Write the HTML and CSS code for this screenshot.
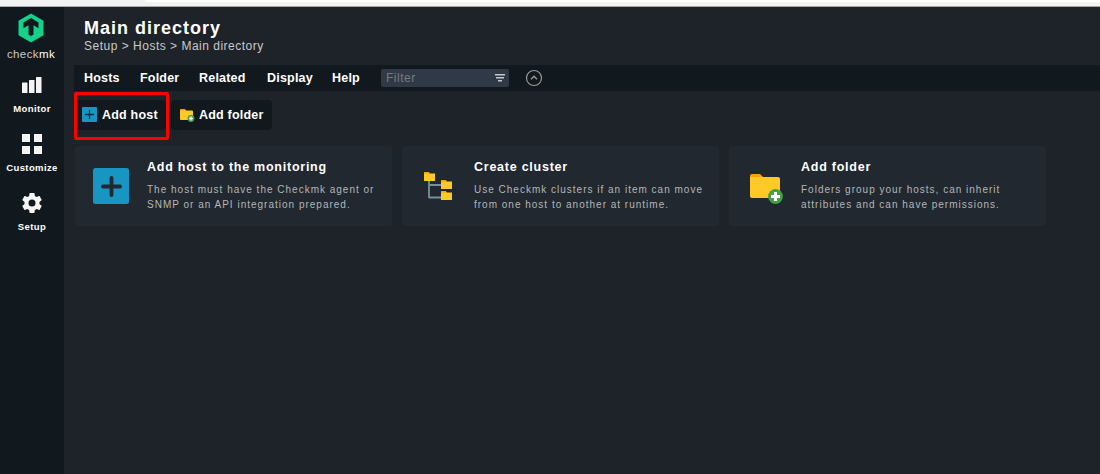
FILE: index.html
```html
<!DOCTYPE html>
<html lang="en">
<head>
<meta charset="utf-8">
<title>Main directory</title>
<link rel="stylesheet" href="styles.css">
</head>
<body>
<div class="browser-edge"><div class="address-bar"></div></div>
<div class="app">
  <nav class="sidebar">
    <a class="brand">
      <svg width="26" height="30" viewBox="0 0 26 30"><path fill="#15d189" d="M13 .5 25.500 7.700v14.600L13 29.500.5 22.300V7.700z"/><path fill="#11181e" d="M13 5 20.500 9.500v5.800L15.500 12.300V21.500L13 23 10.500 21.500V12.300L5.500 15.300V9.500z"/></svg>
      <span class="brand-name">check<b>mk</b></span>
    </a>
    <a class="side-item">
      <svg width="20" height="20" viewBox="0 0 20 20" fill="#f5f5f5"><rect x="0" y="7.500" width="5.500" height="10.500" rx=".6"/><rect x="7" y="5" width="5.500" height="13" rx=".6"/><rect x="14" y="2" width="5.500" height="16" rx=".6"/></svg>
      <span>Monitor</span>
    </a>
    <a class="side-item">
      <svg width="20" height="20" viewBox="0 0 20 20" fill="#f5f5f5"><path d="M0 0h8v8H0zM12 0h8v8h-8zM0 12h8v8H0zM12 12h8v8h-8z"/></svg>
      <span>Customize</span>
    </a>
    <a class="side-item">
      <svg width="20" height="20" viewBox="2 2 20 20" fill="#f5f5f5"><path d="M19.430 12.980c.04-.32.07-.64.07-.98s-.03-.66-.07-.98l2.110-1.650c.19-.15.24-.42.12-.64l-2-3.460c-.12-.22-.39-.3-.61-.22l-2.490 1c-.52-.4-1.080-.73-1.690-.98l-.38-2.650C14.460 2.180 14.250 2 14 2h-4c-.25 0-.46.18-.49.42l-.38 2.650c-.61.25-1.170.59-1.690.98l-2.490-1c-.23-.09-.49 0-.61.22l-2 3.460c-.13.22-.07.49.12.64l2.110 1.650c-.04.32-.07.65-.07.98s.03.66.07.98l-2.110 1.650c-.19.15-.24.42-.12.64l2 3.460c.12.22.39.3.61.22l2.490-1c.52.4 1.080.73 1.690.98l.38 2.650c.03.24.24.42.49.42h4c.25 0 .46-.18.49-.42l.38-2.650c.61-.25 1.170-.59 1.690-.98l2.490 1c.23.09.49 0 .61-.22l2-3.460c.12-.22.07-.49-.12-.64zM12 15.500a3.500 3.500 0 1 1 0-7 3.500 3.500 0 0 1 0 7z"/></svg>
      <span>Setup</span>
    </a>
  </nav>
  <main class="main">
    <header class="head">
      <h1>Main directory</h1>
      <div class="crumbs">Setup &gt; Hosts &gt; Main directory</div>
    </header>
    <div class="menubar">
      <a class="m-hosts">Hosts</a><a class="m-folder">Folder</a><a class="m-related">Related</a><a class="m-display">Display</a><a class="m-help">Help</a>
      <div class="filter"><span>Filter</span>
        <svg width="10" height="8" viewBox="0 0 10 8" fill="#c3c8cd"><path d="M0 0h10v1.600H0zM1 3h8v1.500H1zM3 6h4v1.600H3z"/></svg>
      </div>
      <svg class="toggle" width="18" height="18" viewBox="0 0 18 18" fill="none" stroke="#9a9a9a"><circle cx="9" cy="9" r="7.500" stroke-width="1.200"/><path stroke-width="1.400" d="m6 10.300 3-3 3 3"/></svg>
    </div>
    <div class="actions">
      <a class="action action-host">
        <svg width="15" height="15" viewBox="0 0 15 15"><rect width="15" height="15" rx="1" fill="#1796c4"/><path d="M7.500 3v9M3 7.500h9" stroke="#11283a" stroke-width="1.300"/></svg>
        <span>Add host</span>
      </a>
      <a class="action action-folder">
        <svg width="15" height="14" viewBox="0 0 15 14"><path fill="#ff9f0a" d="M0 1.500Q0 1 .7 1H5l1.500 2V5H0z"/><path fill="#ffca28" d="M0 2.500h12q1 0 1 1V11q0 1-1 1H1q-1 0-1-1z"/><circle cx="11" cy="10.500" r="3.400" fill="#43a047"/><path stroke="#fff" stroke-width="1.300" d="M11 8.500v4M9 10.500h4"/></svg>
        <span>Add folder</span>
      </a>
      <div class="highlight"></div>
    </div>
    <section class="cards">
      <a class="card">
        <svg class="card-icon" width="36" height="36" viewBox="0 0 36 36"><rect width="36" height="36" rx="2.500" fill="#1796c4"/><path d="M18.500 10v17M10 18.500h17" stroke="#21282f" stroke-width="3.800" stroke-linecap="round"/></svg>
        <div><h2>Add host to the monitoring</h2><p>The host must have the Checkmk agent or<br>SNMP or an API integration prepared.</p></div>
      </a>
      <a class="card">
        <svg class="card-icon" width="36" height="36" viewBox="0 0 36 36"><path d="M9 12v18M9 17h12M9 29.500h12" fill="none" stroke="#78909c" stroke-width="1.800"/><path fill="#ff9f0a" d="M4 4h5l1 2v3H4zM21 12h5l1 2v3h-6zM21 23h5l1 2v3h-6z"/><path fill="#ffca28" d="M4 5.500h11V13H4zM21 13.500h11V21H21zM21 24.500h11V32H21z"/></svg>
        <div><h2>Create cluster</h2><p>Use Checkmk clusters if an item can move<br>from one host to another at runtime.</p></div>
      </a>
      <a class="card">
        <svg class="card-icon" width="36" height="36" viewBox="0 0 36 36"><path fill="#ff9f0a" d="M3 8q0-2 2-2h8l3 3v5H3z"/><path fill="#ffca28" d="M3 9h28q2 0 2 2v17q0 2-2 2H5q-2 0-2-2z"/><circle cx="28.500" cy="28.500" r="7.400" fill="#43a047"/><path stroke="#fff" stroke-width="3" d="M28.500 24v9M24 28.500h9"/></svg>
        <div><h2>Add folder</h2><p>Folders group your hosts, can inherit<br>attributes and can have permissions.</p></div>
      </a>
    </section>
  </main>
</div>
</body>
</html>
```
FILE: styles.css
```css
* { box-sizing: border-box; }
body {
  margin: 0;
  height: 474px;
  overflow: hidden;
  background: #1e2229;
  color: #fff;
  font-family: "Liberation Sans", Arial, sans-serif;
}
svg { display: block; flex: none; }
h1, h2, p { margin: 0; }
.browser-edge { height: 7px; background: #f2f2f2; border-bottom: 1px solid #a8acaf; }
.address-bar { margin-left: 145px; height: 2px; background: #fff; border-radius: 0 0 0 3px; }
.app { display: flex; height: 467px; }
.sidebar {
  width: 64px;
  flex: none;
  background: #11181e;
  display: flex;
  flex-direction: column;
  align-items: center;
}
.brand { height: 69px; padding: 6px 2px 0 0; display: flex; flex-direction: column; align-items: center; }
.brand-name { margin-top: 5px; font-size: 11.500px; line-height: 13px; color: #c6c8ca; letter-spacing: 0.4px; }
.brand-name b { font-weight: normal; color: #fff; }
.side-item {
  height: 59px;
  display: flex;
  flex-direction: column;
  align-items: center;
  font-size: 9.500px;
  font-weight: bold;
  letter-spacing: 0.4px;
}
.side-item svg { margin-top: -1px; }
.side-item span { line-height: 12px; margin-top: 8px; }
.main { flex: 1; min-width: 0; }
.head { height: 58px; padding: 10px 0 0 20px; }
h1 { font-size: 18px; line-height: 22px; letter-spacing: 1px; }
.crumbs { font-size: 12px; line-height: 14px; color: #c8c9cb; letter-spacing: 0.5px; }
.menubar {
  height: 26px;
  margin-left: 10px;
  padding-left: 10px;
  background: #11181e;
  display: flex;
  align-items: center;
  font-size: 12.500px;
  font-weight: bold;
  letter-spacing: 0.2px;
}
.m-hosts { width: 56px; }
.m-folder { width: 59px; }
.m-related { width: 68px; }
.m-display { width: 65px; }
.m-help { width: 49px; }
.filter {
  width: 128px;
  height: 18px;
  padding: 0 4px 0 5px;
  display: flex;
  align-items: center;
  justify-content: space-between;
  background: #303946;
  border-radius: 2px;
  color: #777a7f;
  font-size: 12px;
  font-weight: normal;
  letter-spacing: 0.5px;
}
.toggle { margin-left: 16px; }
.actions { position: relative; display: flex; gap: 5px; padding: 9px 0 0 10px; }
.action {
  height: 30px;
  display: flex;
  align-items: center;
  background: #11181e;
  border-radius: 4px;
  font-size: 12.500px;
  font-weight: bold;
  letter-spacing: 0.2px;
}
.action-host { width: 92px; padding-left: 8px; gap: 5px; }
.action-host svg { margin-top: -2px; }
.action-folder { width: 101px; padding-left: 9px; gap: 4px; }
.highlight {
  position: absolute;
  left: 10px;
  top: 1px;
  width: 95px;
  height: 48px;
  border: 3px solid #f00;
  border-radius: 2px;
}
.cards { display: flex; gap: 10px; padding: 16px 0 0 11px; }
.card {
  width: 317px;
  height: 80px;
  padding: 13px 0 0 18px;
  display: flex;
  background: #21282f;
  border-radius: 3px;
}
.card-icon { margin: 9px 18px 0 0; }
h2 { font-size: 12.500px; line-height: 16px; letter-spacing: 0.75px; }
p { margin-top: 7px; font-size: 10px; line-height: 15px; letter-spacing: 1px; color: #b4b6b9; white-space: nowrap; }
```
